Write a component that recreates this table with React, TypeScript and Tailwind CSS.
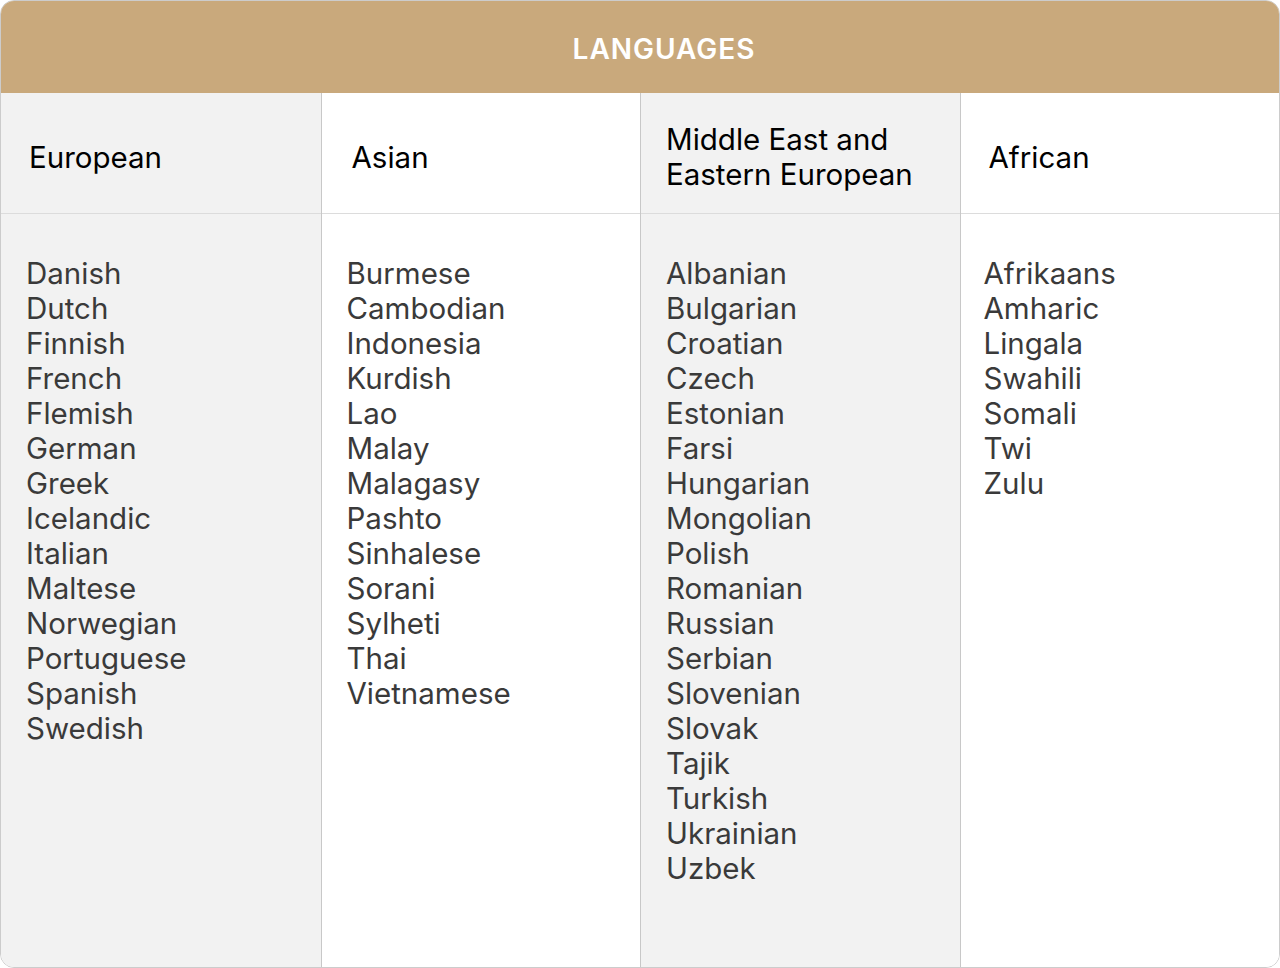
import React from "react";

const cols = [
  {
    title: ["European"],
    bg: "bg-[#f2f2f2]",
    pad: "pl-[28px]",
    items: ["Danish","Dutch","Finnish","French","Flemish","German","Greek","Icelandic","Italian","Maltese","Norwegian","Portuguese","Spanish","Swedish"],
  },
  {
    title: ["Asian"],
    bg: "bg-white",
    pad: "pl-[30px]",
    items: ["Burmese","Cambodian","Indonesia","Kurdish","Lao","Malay","Malagasy","Pashto","Sinhalese","Sorani","Sylheti","Thai","Vietnamese"],
  },
  {
    title: ["Middle East and", "Eastern European"],
    bg: "bg-[#f2f2f2]",
    pad: "pl-[25px]",
    items: ["Albanian","Bulgarian","Croatian","Czech","Estonian","Farsi","Hungarian","Mongolian","Polish","Romanian","Russian","Serbian","Slovenian","Slovak","Tajik","Turkish","Ukrainian","Uzbek"],
  },
  {
    title: ["African"],
    bg: "bg-white",
    pad: "pl-[28px]",
    items: ["Afrikaans","Amharic","Lingala","Swahili","Somali","Twi","Zulu"],
  },
];

export default function App() {
  return (
    <div className="w-[1280px] h-[968px] bg-white" style={{ fontFamily: "Inter, 'Noto Sans', sans-serif" }}>
      <div className="w-full h-full flex flex-col border border-black/20 rounded-[14px] overflow-hidden">
        <div className="h-[92px] shrink-0 bg-[#c9a97c] flex items-center justify-center pl-[48px] pt-[3px]">
          <span className="text-white font-semibold text-[28px] tracking-[1px]">LANGUAGES</span>
        </div>
        <div className="flex-1 grid grid-cols-4">
          {cols.map((c, i) => (
            <div key={i} className={`flex flex-col ${c.bg} ${i > 0 ? "border-l border-[#c8c8c8]" : ""}`}>
              <div className={`h-[121px] shrink-0 border-b border-[#dcdcdc] flex items-center pt-[8px] ${c.pad} text-black text-[29.5px] leading-[35px]`}>
                <div>
                  {c.title.map((t) => (
                    <div key={t}>{t}</div>
                  ))}
                </div>
              </div>
              <div className={`pt-[42px] ${i === 3 ? "pl-[23px]" : "pl-[25px]"} text-[#3a3a3a] text-[29.5px] leading-[35px]`}>
                {c.items.map((t) => (
                  <div key={t}>{t}</div>
                ))}
              </div>
            </div>
          ))}
        </div>
      </div>
    </div>
  );
}
